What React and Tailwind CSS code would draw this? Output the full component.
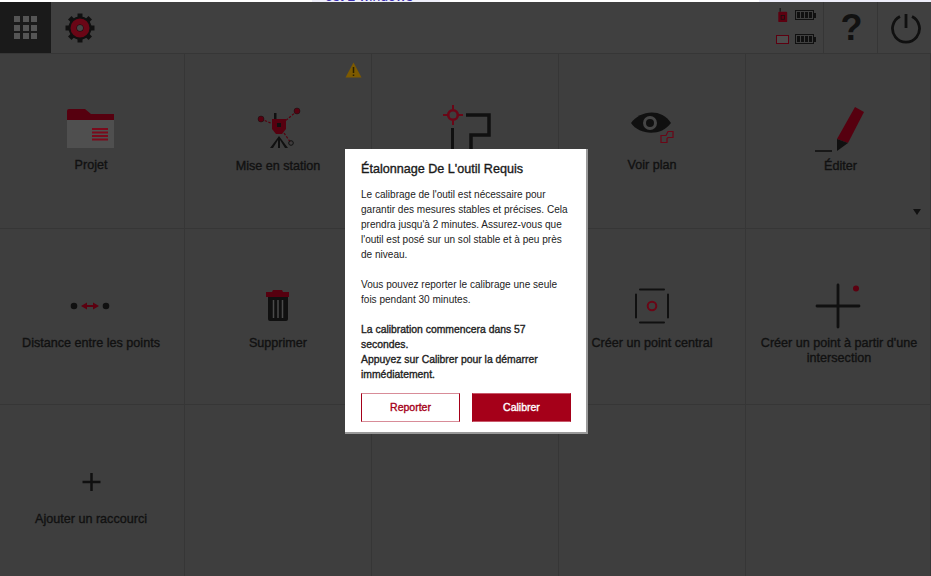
import React from 'react';

const RED = '#56000f';
const INK = '#101010';
const MEDIUM = 'font-normal [-webkit-text-stroke:0.35px_currentColor]';

const FolderIcon = () => (
  <svg width="60" height="60" viewBox="0 0 60 60">
    <path d="M5 12 a2 2 0 0 1 2-2 h16 l6 5 h23 v6 h-47 z" fill={RED} />
    <rect x="5" y="21" width="47" height="28" fill="#4f4f4f" />
    <path d="M30 30 h16 M30 33.500 h16 M30 37 h16 M30 40.500 h16" stroke="#7a0a1c" strokeWidth="1.800" />
  </svg>
);

const StationIcon = () => (
  <svg width="60" height="60" viewBox="0 0 60 60">
    <path d="M13 20 L25 25 M49 12 L36 23 M36 34 L43 44" stroke={RED} strokeWidth="1.200" strokeDasharray="2.500 1.500" />
    <circle cx="13" cy="20" r="3" fill={RED} stroke="#111" strokeWidth="0.500" />
    <circle cx="49" cy="12" r="3" fill={RED} stroke="#111" strokeWidth="0.500" />
    <circle cx="43" cy="44" r="2.300" fill="none" stroke={INK} strokeWidth="1" />
    <rect x="26" y="14" width="2.500" height="7" fill={INK} />
    <path d="M24 20 h14 v10 l-4 5 h-6 l-4 -5 z" fill={RED} />
    <rect x="29" y="24" width="4" height="4" fill={INK} />
    <path d="M31 37 L22 49 h3 L30 41 V49 h2 V41 L37 49 h3 z" fill={INK} />
  </svg>
);

const EyeIcon = () => (
  <svg width="60" height="60" viewBox="0 0 60 60">
    <path d="M9 24 C 17 12, 39 8, 49 24 C 39 38, 17 36, 9 24 z" fill={INK} />
    <circle cx="28" cy="24" r="7" fill="#454545" />
    <circle cx="28" cy="24" r="4" fill={INK} />
    <path d="M46 32.500 h5 v6 h-5 l-1 1 v4 h-6 v-7 h5 z" fill="none" stroke="#6a0616" strokeWidth="1.200" />
  </svg>
);

const PencilIcon = () => (
  <svg width="60" height="60" viewBox="0 0 60 60">
    <path d="M7 52 h17" stroke={INK} strokeWidth="1.600" />
    <path d="M47 8 L56 13 L40 44 L29 40 z" fill={RED} />
    <path d="M29 40 L40 44 L29 52 z" fill={INK} />
  </svg>
);

const DistanceIcon = () => (
  <svg width="60" height="60" viewBox="0 0 60 60">
    <circle cx="12" cy="30" r="3.300" fill={INK} />
    <circle cx="44" cy="30" r="3.300" fill={INK} />
    <path d="M19 30 l6-3.500 v2.500 h6 v-2.500 l6 3.500 l-6 3.500 v-2.500 h-6 v2.500 z" fill="#5c0010" />
  </svg>
);

const TrashIcon = () => (
  <svg width="60" height="60" viewBox="0 0 60 60">
    <g transform="translate(0 2)">
      <path d="M18 14 h6 l1-2 h9 l1 2 h6 v5 h-23 z" fill={RED} />
      <path d="M20 19 h20 v22 a2 2 0 0 1-2 2 h-16 a2 2 0 0 1-2-2 z" fill={INK} />
      <path d="M25.500 22 v18 M30 22 v18 M34.500 22 v18" stroke="#4a4a4a" strokeWidth="1.500" />
    </g>
  </svg>
);

const CenterIcon = () => (
  <svg width="60" height="60" viewBox="0 0 60 60">
    <path d="M14 15 V38 M46 15 V38 M18 10 H42 M18 43 H42" stroke={INK} strokeWidth="2" strokeLinecap="round" transform="translate(0 3.500)" />
    <circle cx="30" cy="30" r="4.300" fill="none" stroke="#6a0616" strokeWidth="2" />
  </svg>
);

const CrossIcon = () => (
  <svg width="60" height="60" viewBox="0 0 60 60">
    <path d="M30 9 V51 M9 30 H51" stroke={INK} strokeWidth="2.800" strokeLinecap="round" />
    <circle cx="48" cy="12.500" r="3" fill="#5c0010" />
  </svg>
);

const PlusIcon = () => (
  <svg width="60" height="60" viewBox="0 0 60 60">
    <path d="M29.500 21 V39 M20.500 30 H38.500" stroke={INK} strokeWidth="2.500" />
  </svg>
);

const TargetIcon = () => (
  <svg width="60" height="60" viewBox="0 0 60 60">
    <circle cx="18" cy="16" r="4.800" fill="none" stroke="#6a0616" strokeWidth="2.600" />
    <path d="M18 6 v4 M18 22 v4 M8 16 h4 M24 16 h4" stroke="#6a0616" strokeWidth="2" />
    <path d="M17.500 29 V60" stroke={INK} strokeWidth="3" />
    <path d="M31 16 H54 V36 H36 V60" fill="none" stroke={INK} strokeWidth="3.500" />
  </svg>
);

const Battery = () => (
  <div className="flex items-center">
    <div className="flex h-[10px] w-[19px] gap-px border border-[#101010] p-px">
      <span className="flex-1 bg-[#101010]" />
      <span className="flex-1 bg-[#101010]" />
      <span className="flex-1 bg-[#101010]" />
      <span className="flex-1 bg-[#101010]" />
    </div>
    <span className="h-[5px] w-[2px] bg-[#101010]" />
  </div>
);

const Tile = ({ icon, label, iconClass = 'mt-[47px]', labelClass = '', children }) => (
  <div className="relative flex flex-col items-center border-r border-b border-[#363636]">
    {children}
    {icon && <div className={`flex h-[60px] w-[60px] items-center justify-center ${iconClass}`}>{icon}</div>}
    {label && <div className={`px-2 text-center text-[12.600px] leading-[15px] text-[#111] ${MEDIUM} ${labelClass}`}>{label}</div>}
  </div>
);

export default function App() {
  return (
    <div className="flex h-[576px] w-[931px] flex-col overflow-hidden bg-[#3e3e3e] font-['Liberation_Sans',Arial,sans-serif]">
      <div className="flex h-[2px] shrink-0 bg-white">
        <div className="ml-[312px] h-[2px] w-[128px] overflow-hidden bg-[#eeeefa] pl-[13px] text-[14px] leading-[2px] text-[#3a2fb0]">
          <span className="relative -top-[5px]">est 2 windows</span>
        </div>
        <div className="ml-auto h-[2px] w-[172px] bg-[#eeeefa]" />
      </div>

      <div className="flex h-[52px] shrink-0 items-center border-b border-[#363636] bg-[#404040]">
        <div className="flex h-full w-[51px] items-center justify-center bg-[#1a1a1a]">
          <div className="grid grid-cols-3 gap-[2.500px]">
            {Array.from({ length: 9 }).map((_, i) => (
              <span key={i} className="h-[6px] w-[6px] bg-[#555555]" />
            ))}
          </div>
        </div>
        <svg className="ml-[14px]" width="30" height="30" viewBox="0 0 30 30">
          <g fill={INK}>
            {[0, 45, 90, 135, 180, 225, 270, 315].map((a) => (
              <rect key={a} x="12.500" y="0.500" width="5" height="6" transform={`rotate(${a} 15 15)`} />
            ))}
          </g>
          <circle cx="15" cy="15" r="11.500" fill={INK} />
          <circle cx="15" cy="15" r="6.500" fill="none" stroke="#6a0616" strokeWidth="6" />
          <circle cx="15" cy="15" r="3" fill="#454545" />
        </svg>

        <div className="ml-auto flex h-full">
          <div className="flex w-[47px] flex-col gap-[10px] pt-[6px]">
            <div className="flex h-[14px] items-center gap-[6px]">
              <svg width="13" height="15" viewBox="0 0 13 16">
                <path d="M4 0 v4" stroke={INK} strokeWidth="1.200" />
                <rect x="2" y="4" width="9.500" height="11" rx="1" fill="#5c0010" />
                <rect x="5" y="8" width="3.500" height="4" fill="none" stroke={INK} strokeWidth="0.800" />
              </svg>
              <Battery />
            </div>
            <div className="flex h-[14px] items-center gap-[6px]">
              <div className="h-[9px] w-[13px] border border-[#5c0010] bg-[#4c4c4c]" />
              <Battery />
            </div>
          </div>
          <div className="flex w-[55px] items-center justify-center border-x border-[#363636] pl-[2px] text-[36px] font-bold text-[#111]">?</div>
          <div className="flex w-[53px] items-center justify-center pl-[2px]">
            <svg width="32" height="32" viewBox="0 0 32 32" fill="none" stroke={INK} strokeWidth="2.800">
              <path d="M16 2 V16" />
              <path d="M10 4.500 A13.500 13.500 0 1 0 22 4.500" />
            </svg>
          </div>
        </div>
      </div>

      <div className="grid flex-1 grid-cols-[185px_187px_187px_187px_185px] grid-rows-[175px_176px_172px]">
        <Tile icon={<FolderIcon />} iconClass="mt-[45px]" label="Projet" labelClass="-mt-[1px] mr-[2px]" />
        <Tile icon={<StationIcon />} iconClass="mt-[45px]" label="Mise en station">
          <svg className="absolute top-[8px] right-[9px]" width="17" height="16" viewBox="0 0 17 16">
            <path d="M8.500 0.500 L16.500 15.500 H0.500 z" fill="#7d5a00" />
            <path d="M8.500 5 V11 M8.500 12.500 V14" stroke="#2a2000" strokeWidth="1.500" />
          </svg>
        </Tile>
        <Tile icon={<TargetIcon />} iconClass="mt-[45px]" />
        <Tile icon={<EyeIcon />} iconClass="mt-[45px]" label="Voir plan" labelClass="-mt-[1px]" />
        <Tile icon={<PencilIcon />} iconClass="mt-[45px]" label="Éditer" labelClass="ml-[5px]">
          <span className="absolute right-[9px] bottom-[13px] h-0 w-0 border-x-[4px] border-t-[6px] border-x-transparent border-t-[#111]" />
        </Tile>

        <Tile icon={<DistanceIcon />} label="Distance entre les points" labelClass="mr-[2px]" />
        <Tile icon={<TrashIcon />} label="Supprimer" />
        <Tile />
        <Tile icon={<CenterIcon />} label="Créer un point central" />
        <Tile icon={<CrossIcon />} label="Créer un point à partir d'une intersection" labelClass="ml-[2px]" />

        <Tile icon={<PlusIcon />} label="Ajouter un raccourci" labelClass="mr-[2px]" />
        <Tile />
        <Tile />
        <Tile />
        <Tile />
      </div>

      <div className="absolute top-[149px] left-[345px] flex h-[285px] w-[243px] flex-col border-r-2 border-b-2 border-[#9a9a9a] bg-white pt-[12px] pr-[15px] pl-[16px] text-[#222]">
        <h2 className={`text-[12.600px] leading-[16px] text-[#1a1a1a] ${MEDIUM}`}>Étalonnage De L'outil Requis</h2>
        <div className="mt-[10px] text-[10.050px] leading-[15px]">
          <p>
            Le calibrage de l'outil est nécessaire pour garantir des mesures stables et précises. Cela prendra jusqu'à 2 minutes. Assurez-vous que l'outil est posé sur un sol stable et à peu près de niveau.
          </p>
          <p className="mt-[15px]">Vous pouvez reporter le calibrage une seule fois pendant 30 minutes.</p>
          <p className={`mt-[15px] text-[10.400px] ${MEDIUM}`}>
            La calibration commencera dans 57 secondes.
            <br />
            Appuyez sur Calibrer pour la démarrer immédiatement.
          </p>
        </div>
        <div className="mt-[11px] flex justify-between">
          <button className={`h-[29px] w-[99px] border border-x-[#a50019] border-y-[#d88c98] bg-white text-[10.500px] text-[#a50019] ${MEDIUM}`}>Reporter</button>
          <button className={`h-[29px] w-[99px] border border-x-[#a50019] border-y-[#c9586a] bg-[#a50019] text-[10.500px] text-white ${MEDIUM}`}>Calibrer</button>
        </div>
      </div>
    </div>
  );
}
